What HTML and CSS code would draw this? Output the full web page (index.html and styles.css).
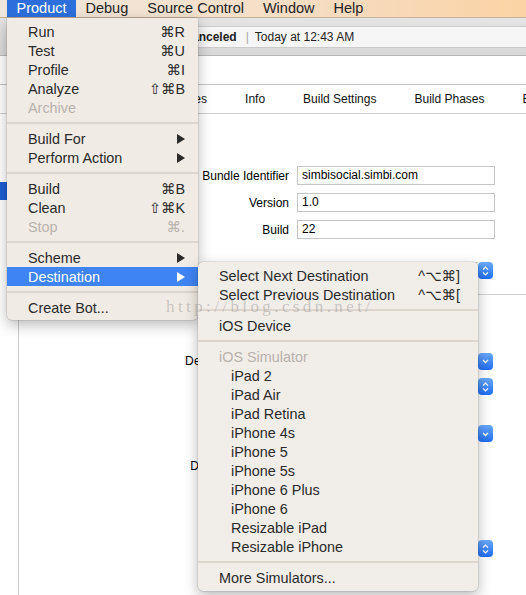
FILE: index.html
```html
<!DOCTYPE html>
<html>
<head>
<meta charset="utf-8">
<title>Xcode Product menu</title>
<link rel="stylesheet" href="styles.css">
</head>
<body>
<div class="screen">
  <div class="menubar">
    <span class="mb-item active">Product</span>
    <span class="mb-item">Debug</span>
    <span class="mb-item">Source Control</span>
    <span class="mb-item">Window</span>
    <span class="mb-item">Help</span>
  </div>

  <div class="window">
    <div class="toolbar">
      <div class="status"><b>Build Canceled</b><span class="bar">|</span><span>Today at 12:43 AM</span></div>
    </div>
    <div class="header"></div>
    <div class="tabs">
      <span class="tab-hidden"></span><span>Capabilities</span><span>Info</span><span>Build Settings</span><span>Build Phases</span><span>Build Rules</span>
    </div>
    <div class="content">
      <div class="targets"><div class="target-row sel"></div></div>
      <div class="form">
        <div class="row"><label>Bundle Identifier</label><div class="field">simbisocial.simbi.com</div></div>
        <div class="row r-gap8"><label>Version</label><div class="field">1.0</div></div>
        <div class="row r-gap8"><label>Build</label><div class="field">22</div></div>
        <div class="row r-popup1"><label></label>
          <div class="popup"><div class="popup-box"></div><div class="popup-btn"><svg width="9" height="12" viewBox="0 0 9 12"><path d="M2 4.6 L4.5 2.1 L7 4.6 M2 7.4 L4.5 9.9 L7 7.4" fill="none" stroke="#fff" stroke-width="1.3"/></svg></div></div>
        </div>
        <div class="divider"></div>
        <div class="row r-deploy"><label>Deployment Target</label>
          <div class="popup"><div class="popup-box"></div><div class="popup-btn"><svg width="9" height="12" viewBox="0 0 9 12"><path d="M2 5 L4.5 7.5 L7 5" fill="none" stroke="#fff" stroke-width="1.3"/></svg></div></div>
        </div>
        <div class="row r-devices"><label></label>
          <div class="popup"><div class="popup-box"></div><div class="popup-btn"><svg width="9" height="12" viewBox="0 0 9 12"><path d="M2 4.6 L4.5 2.1 L7 4.6 M2 7.4 L4.5 9.9 L7 7.4" fill="none" stroke="#fff" stroke-width="1.3"/></svg></div></div>
        </div>
        <div class="row r-main"><label></label>
          <div class="popup"><div class="popup-box"></div><div class="popup-btn"><svg width="9" height="12" viewBox="0 0 9 12"><path d="M2 5 L4.5 7.5 L7 5" fill="none" stroke="#fff" stroke-width="1.3"/></svg></div></div>
        </div>
        <div class="row r-orient"><label>Device Orientation</label></div>
        <div class="row r-status"><label></label>
          <div class="popup"><div class="popup-box"></div><div class="popup-btn"><svg width="9" height="12" viewBox="0 0 9 12"><path d="M2 4.6 L4.5 2.1 L7 4.6 M2 7.4 L4.5 9.9 L7 7.4" fill="none" stroke="#fff" stroke-width="1.3"/></svg></div></div>
        </div>
      </div>
    </div>
  </div>

  <div class="menu product-menu">
    <div class="mi"><span class="label">Run</span><span class="kbd">⌘R</span></div>
    <div class="mi"><span class="label">Test</span><span class="kbd">⌘U</span></div>
    <div class="mi"><span class="label">Profile</span><span class="kbd">⌘I</span></div>
    <div class="mi"><span class="label">Analyze</span><span class="kbd">⇧⌘B</span></div>
    <div class="mi disabled"><span class="label">Archive</span></div>
    <div class="sep"></div>
    <div class="mi"><span class="label">Build For</span><svg class="arrow" width="8" height="10" viewBox="0 0 8 10"><path d="M0 0 L8 5 L0 10 Z"/></svg></div>
    <div class="mi"><span class="label">Perform Action</span><svg class="arrow" width="8" height="10" viewBox="0 0 8 10"><path d="M0 0 L8 5 L0 10 Z"/></svg></div>
    <div class="sep"></div>
    <div class="mi"><span class="label">Build</span><span class="kbd">⌘B</span></div>
    <div class="mi"><span class="label">Clean</span><span class="kbd">⇧⌘K</span></div>
    <div class="mi disabled"><span class="label">Stop</span><span class="kbd">⌘.</span></div>
    <div class="sep"></div>
    <div class="mi"><span class="label">Scheme</span><svg class="arrow" width="8" height="10" viewBox="0 0 8 10"><path d="M0 0 L8 5 L0 10 Z"/></svg></div>
    <div class="mi hl"><span class="label">Destination</span><svg class="arrow" width="8" height="10" viewBox="0 0 8 10"><path d="M0 0 L8 5 L0 10 Z"/></svg></div>
    <div class="sep"></div>
    <div class="mi"><span class="label">Create Bot...</span></div>
  </div>

  <div class="menu dest-menu">
    <div class="mi"><span class="label">Select Next Destination</span><span class="kbd">^⌥⌘]</span></div>
    <div class="mi"><span class="label">Select Previous Destination</span><span class="kbd">^⌥⌘[</span></div>
    <div class="sep"></div>
    <div class="mi"><span class="label">iOS Device</span></div>
    <div class="sep"></div>
    <div class="mi disabled"><span class="label">iOS Simulator</span></div>
    <div class="mi sub"><span class="label">iPad 2</span></div>
    <div class="mi sub"><span class="label">iPad Air</span></div>
    <div class="mi sub"><span class="label">iPad Retina</span></div>
    <div class="mi sub"><span class="label">iPhone 4s</span></div>
    <div class="mi sub"><span class="label">iPhone 5</span></div>
    <div class="mi sub"><span class="label">iPhone 5s</span></div>
    <div class="mi sub"><span class="label">iPhone 6 Plus</span></div>
    <div class="mi sub"><span class="label">iPhone 6</span></div>
    <div class="mi sub"><span class="label">Resizable iPad</span></div>
    <div class="mi sub"><span class="label">Resizable iPhone</span></div>
    <div class="sep"></div>
    <div class="mi"><span class="label">More Simulators...</span></div>
  </div>

  <div class="watermark">http://blog.csdn.net/</div>
</div>
</body>
</html>
```

FILE: styles.css
```css
html, body {
  margin: 0;
  padding: 0;
}
body {
  width: 526px;
  height: 595px;
  overflow: hidden;
  background: #fff;
  font-family: "Liberation Sans", Arial, sans-serif;
}
.screen {
  position: relative;
  width: 526px;
  height: 595px;
  overflow: hidden;
}

/* menu bar */
.menubar {
  display: flex;
  height: 17px;
  padding-left: 7px;
  border-bottom: 1px solid #c6b39c;
  background: linear-gradient(90deg, #efe6dc 0%, #f3e2cf 35%, #f7dabb 70%, #fbd3a4 100%);
  font-size: 14.5px;
  line-height: 17px;
  color: #222;
  white-space: nowrap;
}
.mb-item {
  padding: 0 9.5px;
}
.mb-item.active {
  background: #2c6fdc;
  color: #fff;
}

/* window */
.toolbar {
  height: 29px;
  padding-top: 8px;
  background: linear-gradient(#e4e4e4, #d8d8d8);
  border-bottom: 1px solid #b8b8b8;
}
.status {
  display: flex;
  margin-left: 120px;
  height: 22px;
  box-sizing: border-box;
  padding-left: 29px;
  background: #f6f6f6;
  border: 1px solid #cbcbcb;
  border-right: none;
  border-radius: 4px 0 0 4px;
  font-size: 12px;
  line-height: 20px;
  color: #222;
  white-space: nowrap;
}
.status .bar {
  margin: 0 6px 0 9px;
  color: #a8a8a8;
}
.header {
  height: 28px;
  background: #fff;
  border-bottom: 1px solid #c6c6c6;
}
.tabs {
  display: flex;
  align-items: center;
  gap: 38px;
  height: 28px;
  padding-left: 64px;
  border-bottom: 1px solid #cfcfcf;
  font-size: 12px;
  color: #111;
  white-space: nowrap;
}
.tabs span {
  flex: none;
}
.tabs .tab-hidden {
  width: 43px;
}
.content {
  display: flex;
  height: 481px;
}
.targets {
  width: 18px;
  flex: none;
  padding-top: 68px;
  border-right: 1px solid #cdcdcd;
}
.target-row.sel {
  height: 18px;
  background: #1b60d4;
}
.form {
  flex: 1;
  padding-top: 52px;
  font-size: 12px;
  color: #000;
}
.row {
  display: flex;
  align-items: center;
  gap: 8px;
  height: 17px;
}
.row label {
  width: 270px;
  flex: none;
  text-align: right;
  white-space: nowrap;
}
.row:first-child,
.r-gap8 {
  height: 19px;
}
.r-gap8 { margin-top: 8px; }
.r-popup1 { margin-top: 23px; }
.r-deploy { margin-top: 57px; height: 18px; }
.r-deploy label { letter-spacing: 0.2px; }
.r-devices { margin-top: 8px; }
.r-main { margin-top: 30px; }
.r-orient { margin-top: 15px; }
.r-status { margin-top: 66px; }

.field {
  width: 198px;
  height: 19px;
  box-sizing: border-box;
  padding-left: 4px;
  border: 1px solid #c5c5c5;
  background: #fff;
  line-height: 17px;
  white-space: nowrap;
}
.divider {
  height: 1px;
  margin-top: 15px;
  background: #d4d4d4;
}
.popup {
  display: flex;
  width: 196px;
  height: 17px;
}
.popup-box {
  flex: 1;
  box-sizing: border-box;
  border: 1px solid #c8c8c8;
  border-right: none;
  border-radius: 3px 0 0 3px;
  background: #fff;
}
.popup-btn {
  width: 15px;
  height: 100%;
  display: flex;
  align-items: center;
  justify-content: center;
  border-radius: 4px;
  background: linear-gradient(#6aa9fb, #1f6ef3);
}

/* menus */
.menu {
  position: absolute;
  box-sizing: border-box;
  background: #f1ebe5;
  box-shadow: 0 5px 14px rgba(0, 0, 0, 0.28), 0 0 0 0.5px rgba(0, 0, 0, 0.16);
  font-size: 14.4px;
  color: #2a2a2a;
}
.product-menu {
  left: 7px;
  top: 18px;
  width: 191px;
  padding: 4px 0 3px;
  border-radius: 0 0 5px 5px;
}
.dest-menu {
  left: 198px;
  top: 262px;
  width: 280px;
  padding: 4px 0;
  border-radius: 5px;
  background: #f1ede9;
}
.mi {
  display: flex;
  align-items: center;
  height: 19px;
  padding: 0 13px 0 21px;
  white-space: nowrap;
}
.dest-menu .mi {
  padding-right: 18px;
}
.dest-menu .mi.sub {
  padding-left: 33px;
}
.mi .label {
  flex: 1;
}
.mi .kbd {
  font-family: "Liberation Sans", "DejaVu Sans", sans-serif;
}
.mi.disabled {
  color: #b7b2ad;
}
.mi .arrow {
  fill: #2a2a2a;
}
.mi.hl {
  background: #3e84f3;
  color: #fff;
}
.mi.hl .arrow {
  fill: #fff;
}
.sep {
  display: flex;
  align-items: center;
  height: 12px;
}
.sep::before {
  content: "";
  flex: 1;
  height: 2px;
  background: #ddd6cf;
}

.watermark {
  position: absolute;
  left: 166px;
  top: 297px;
  font-family: "Liberation Serif", serif;
  font-size: 17px;
  line-height: 20px;
  letter-spacing: 3.4px;
  color: rgba(130, 130, 130, 0.38);
  white-space: nowrap;
  pointer-events: none;
}
```
